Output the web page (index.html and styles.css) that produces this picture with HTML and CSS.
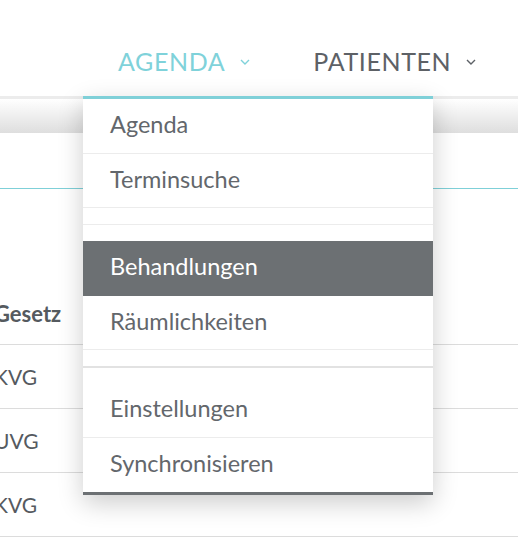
FILE: index.html
```html
<!DOCTYPE html>
<html lang="de">
<head>
<meta charset="utf-8">
<link rel="stylesheet" href="styles.css">
</head>
<body>
<header class="header">
  <nav class="nav">
    <div class="nav-item nav-item--active">
      <span class="nav-label">AGENDA</span>
      <svg class="chev" width="10" height="6" viewBox="0 0 10 6"><polyline points="1,1 5,5 9,1" fill="none" stroke="currentColor" stroke-width="1.4"/></svg>
    </div>
    <div class="nav-item">
      <span class="nav-label">PATIENTEN</span>
      <svg class="chev" width="10" height="6" viewBox="0 0 10 6"><polyline points="1,1 5,5 9,1" fill="none" stroke="currentColor" stroke-width="1.4"/></svg>
    </div>
  </nav>
</header>
<div class="subbar"></div>
<main class="content">
  <div class="filter"></div>
  <table class="table">
    <thead>
      <tr><th>Gesetz</th></tr>
    </thead>
    <tbody>
      <tr><td>KVG</td></tr>
      <tr><td>UVG</td></tr>
      <tr><td>KVG</td></tr>
    </tbody>
  </table>
</main>
<ul class="dropdown">
  <li class="dd-item">Agenda</li>
  <li class="dd-item">Terminsuche</li>
  <li class="dd-gap"></li>
  <li class="dd-space"></li>
  <li class="dd-item dd-item--active">Behandlungen</li>
  <li class="dd-item">Räumlichkeiten</li>
  <li class="dd-space"></li>
  <li class="dd-divider"></li>
  <li class="dd-space dd-space--short"></li>
  <li class="dd-item">Einstellungen</li>
  <li class="dd-item dd-item--last">Synchronisieren</li>
</ul>
</body>
</html>
```
FILE: styles.css
```css
* { box-sizing: border-box; }
html, body { margin: 0; padding: 0; }
body {
  font-family: Lato, "Open Sans", sans-serif;
  color: #5d6166;
  background: #fff;
  width: 518px;
  height: 549px;
  overflow: hidden;
  position: relative;
}
.header {
  height: 96px;
  padding-top: 43px;
}
.nav {
  display: flex;
  padding-left: 118px;
  gap: 63px;
}
.nav-item {
  display: flex;
  align-items: center;
  gap: 15px;
  height: 36px;
  color: #5d6166;
}
.nav-item--active { color: #7fd2da; }
.nav-label {
  font-size: 25px;
  line-height: 36px;
  letter-spacing: 0.6px;
}
.chev { display: block; margin-top: 2px; }
.subbar {
  height: 37px;
  border-top: 3px solid #ececec;
  background: linear-gradient(#ffffff, #dedede);
}
.filter {
  height: 56px;
  border-bottom: 1px solid #7fd0d8;
}
.table {
  border-collapse: collapse;
  width: 530px;
  margin-left: -6px;
  margin-top: 91px;
  font-size: 21px;
  color: #555a5f;
}
.table th, .table td {
  text-align: left;
  padding: 0;
  height: 64px;
  border-bottom: 1px solid #dcdcdc;
}
.table th { font-weight: 700; font-size: 22px; padding-top: 4px; }
.dropdown {
  position: absolute;
  left: 83px;
  top: 96px;
  width: 350px;
  margin: 0;
  padding: 0;
  list-style: none;
  background: #fff;
  border-top: 3px solid #7fd0d8;
  border-bottom: 3px solid #6c7073;
  box-shadow: 0 8px 24px rgba(0,0,0,0.2);
}
.dd-item {
  height: 54.5px;
  line-height: 51px;
  padding: 0 27px;
  font-size: 23.5px;
  color: #63676c;
  border-bottom: 1px solid #ececec;
}
.dd-item--active {
  background: #6c7073;
  color: #fff;
  border-bottom-color: #6c7073;
}
.dd-item--last { border-bottom: 0; }
.dd-gap {
  height: 17px;
  border-bottom: 1px solid #ececec;
}
.dd-space { height: 16px; }
.dd-space--short { height: 15px; }
.dd-divider {
  height: 2px;
  background: #e2e2e2;
}
```
